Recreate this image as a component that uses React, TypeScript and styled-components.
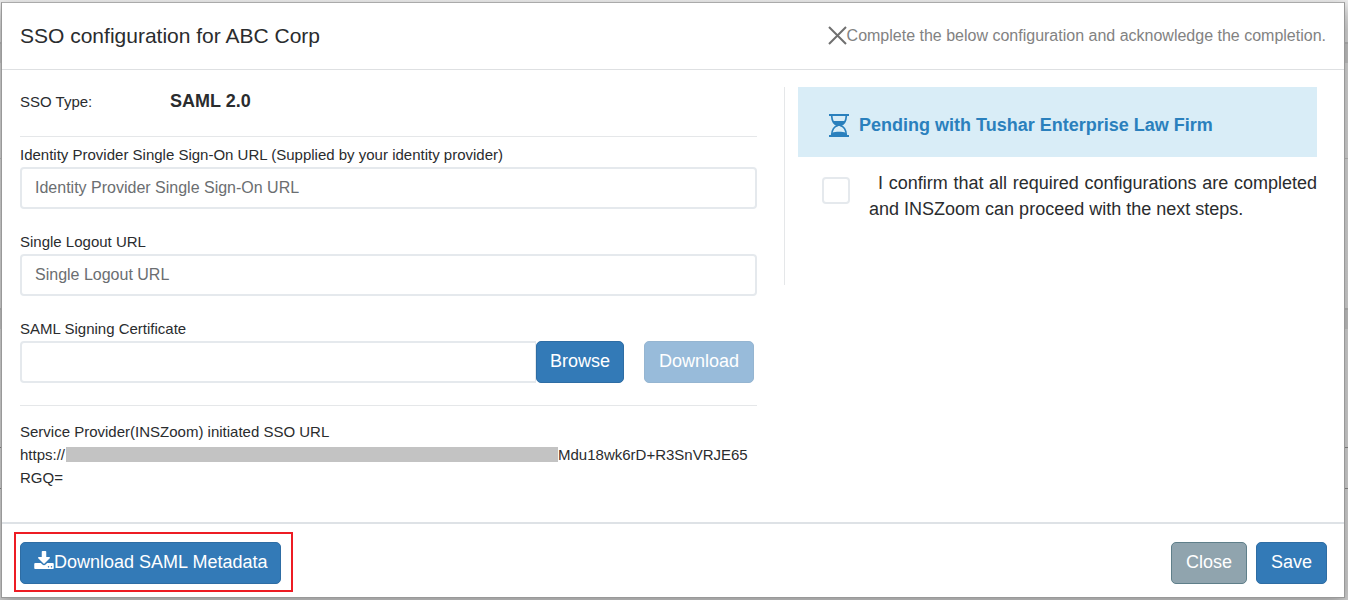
import React from "react";
import styled, { createGlobalStyle } from "styled-components";

const GlobalStyle = createGlobalStyle`
  * { box-sizing: border-box; }
  body {
    margin: 0;
    background: #c4c4c4;
    color: #2a2c2e;
    font-family: "Liberation Sans", Arial, sans-serif;
    font-size: 15px;
    line-height: 23px;
  }
`;

const Page = styled.div`
  display: flex;
  min-height: 100vh;
  padding: 2px 3px 2px 1px;
  background:
    linear-gradient(
      transparent 42px, #b4b4b4 42px 44px, #c2c2c2 44px 63px, transparent 63px,
      transparent 158px, #b8b8b8 158px 159px, transparent 159px,
      transparent 308px, #b4b4b4 308px 310px, #c2c2c2 310px 329px, transparent 329px,
      transparent 447px, #888 447px 448px, transparent 448px,
      transparent 488px, #888 488px 489px, transparent 489px
    ),
    linear-gradient(#eee, #d6d6d6 30px, #d2d2d2);
`;

const Dialog = styled.section`
  flex: 1;
  display: flex;
  flex-direction: column;
  border: 1px solid #999;
  border-top-color: #aaa;
  background: #fff;
  box-shadow: 0 5px 15px rgba(0, 0, 0, 0.3);
`;

const Header = styled.header`
  display: flex;
  align-items: center;
  justify-content: space-between;
  padding: 20px 18px;
  border-bottom: 1px solid #dee0e2;
`;

const Title = styled.h1`
  margin: 0;
  font-size: 21px;
  line-height: 26px;
  font-weight: 400;
`;

const HeaderNote = styled.div`
  display: flex;
  align-items: center;
  padding-bottom: 2px;
  font-size: 16px;
  color: #828282;
`;

const IconButton = styled.button`
  display: flex;
  padding: 0;
  border: 0;
  background: none;
  color: #6f6f6f;
  cursor: pointer;
`;

const Body = styled.main`
  flex: 1;
  display: grid;
  grid-template-columns: 34fr 25fr;
  align-items: start;
  gap: 27px;
  padding: 17px 18px 32px;
`;

const TypeRow = styled.div`
  display: flex;
  align-items: baseline;
  line-height: 28px;
  padding-bottom: 20px;
`;

const TypeLabel = styled.span`
  width: 150px;
`;

const TypeValue = styled.strong`
  font-size: 18px;
`;

const Divider = styled.hr`
  margin: 0;
  border: 0;
  border-top: 1px solid #e5e7e9;
`;

const Fields = styled.div`
  display: grid;
  gap: 22px;
  padding: 7px 0 22px;
`;

const Label = styled.label`
  display: block;
  padding-bottom: 2px;
  line-height: 21px;
`;

const TextInput = styled.input`
  display: block;
  width: 100%;
  height: 42px;
  padding: 0 13px;
  border: 2px solid #e5e9ed;
  border-radius: 4px;
  background: #fff;
  color: #495057;
  font: inherit;
  font-size: 16px;
  &::placeholder { color: #6b6e71; opacity: 1; }
`;

const FileRow = styled.div`
  display: flex;
  padding-right: 3px;
`;

const FileInput = styled(TextInput)`
  flex: 1;
  border-right-width: 1px;
  border-radius: 4px 0 0 4px;
`;

const Button = styled.button<{ $tone?: "primary" | "grey"; $compact?: boolean }>`
  display: flex;
  align-items: center;
  height: 42px;
  padding: 0 ${(p) => (p.$compact ? 13 : 14)}px 2px;
  border: 1px solid ${(p) => (p.$tone === "grey" ? "#5f7f8a" : "#2e6da4")};
  border-radius: 5px;
  background: ${(p) => (p.$tone === "grey" ? "#90a4ae" : "#337ab7")};
  color: #fff;
  font: inherit;
  font-size: 18px;
  white-space: nowrap;
  cursor: pointer;
  &:disabled { opacity: 0.5; cursor: default; }
`;

const DownloadSlot = styled.div`
  margin-left: 20px;
`;

const ServiceUrl = styled.div`
  padding-top: 14px;
`;

const Redacted = styled.span`
  display: inline-block;
  width: 492px;
  height: 15px;
  margin-left: 1px;
  vertical-align: -2px;
  background: #c3c3c3;
`;

const StatusColumn = styled.aside`
  min-height: 198px;
  padding: 0 9px 0 13px;
  border-left: 1px solid #e5e7e9;
`;

const Alert = styled.div`
  display: flex;
  align-items: center;
  gap: 10px;
  height: 70px;
  padding: 6px 31px 0;
  background: #d9edf7;
  color: #2a80bd;
  font-size: 18px;
  font-weight: 700;
`;

const Confirm = styled.div`
  display: flex;
  align-items: flex-start;
  gap: 19px;
  padding: 13px 0 0 24px;
`;

const Checkbox = styled.input`
  appearance: none;
  flex: none;
  width: 28px;
  height: 27px;
  margin: 7px 0 0;
  border: 2px solid #e5e9ed;
  border-radius: 4px;
  background: #fff;
`;

const ConfirmLabel = styled.label`
  font-size: 18px;
  line-height: 26px;
  text-align: justify;
  text-indent: 9px;
`;

const Footer = styled.footer`
  display: flex;
  align-items: flex-start;
  justify-content: space-between;
  padding: 8px 17px 5px 12px;
  border-top: 2px solid #dee2e6;
`;

const Highlight = styled.div`
  padding: 8px 10px 6px 4px;
  border: 2px solid #ed1c24;
`;

const Actions = styled.div`
  display: flex;
  gap: 9px;
  padding-top: 10px;
`;

const Glyph = styled.svg`
  margin-bottom: 4px;
`;

const CloseIcon = () => (
  <svg width="19" height="19" viewBox="0 0 19 19" fill="none" stroke="currentColor" strokeWidth="2" aria-hidden="true">
    <path d="M1 1 18 18M18 1 1 18" />
  </svg>
);

const HourglassIcon = () => (
  <svg width="20" height="23" viewBox="0 0 20 23" aria-hidden="true">
    <path fill="currentColor" d="M0 0H20V2H0ZM0 21H20V23H0ZM3.500 7H16.500C15.500 10 13.500 11 12 12H8C6.500 11 4.500 10 3.500 7ZM2.500 21 3.500 18.500C6 17.500 14 17.500 16.500 18.500L17.500 21Z" />
    <path fill="none" stroke="currentColor" strokeWidth="1.700" d="M2.700 2C2.900 7 5 10.500 9 11.500C5 12.500 2.900 16 2.700 21M17.300 2C17.100 7 15 10.500 11 11.500C15 12.500 17.100 16 17.300 21" />
  </svg>
);

const DownloadIcon = () => (
  <Glyph width="20" height="18" viewBox="0 0 1664 1536" fill="currentColor" aria-hidden="true">
    <path d="M1280 1344q0-26-19-45t-45-19-45 19-19 45 19 45 45 19 45-19 19-45zm256 0q0-26-19-45t-45-19-45 19-19 45 19 45 45 19 45-19 19-45zm128-224v320q0 40-28 68t-68 28H96q-40 0-68-28t-28-68v-320q0-40 28-68t68-28h465l135 136q58 56 136 56t136-56l136-136h464q40 0 68 28t28 68zm-325-569q17 41-14 70l-448 448q-18 19-45 19t-45-19L339 621q-31-29-14-70 17-39 59-39h256V64q0-26 19-45t45-19h256q26 0 45 19t19 45v448h256q42 0 59 39z" />
  </Glyph>
);

export default function App() {
  return (
    <>
      <GlobalStyle />
      <Page>
        <Dialog role="dialog" aria-labelledby="dialog-title">
          <Header>
            <Title id="dialog-title">SSO configuration for ABC Corp</Title>
            <HeaderNote>
              <IconButton type="button" aria-label="Close dialog">
                <CloseIcon />
              </IconButton>
              <span>Complete the below configuration and acknowledge the completion.</span>
            </HeaderNote>
          </Header>
          <Body>
            <div>
              <TypeRow>
                <TypeLabel>SSO Type:</TypeLabel>
                <TypeValue>SAML 2.0</TypeValue>
              </TypeRow>
              <Divider />
              <Fields>
                <div>
                  <Label htmlFor="idp-url">Identity Provider Single Sign-On URL (Supplied by your identity provider)</Label>
                  <TextInput id="idp-url" type="text" placeholder="Identity Provider Single Sign-On URL" />
                </div>
                <div>
                  <Label htmlFor="logout-url">Single Logout URL</Label>
                  <TextInput id="logout-url" type="text" placeholder="Single Logout URL" />
                </div>
                <div>
                  <Label htmlFor="certificate">SAML Signing Certificate</Label>
                  <FileRow>
                    <FileInput id="certificate" type="text" />
                    <Button type="button" $compact>Browse</Button>
                    <DownloadSlot>
                      <Button type="button" disabled>Download</Button>
                    </DownloadSlot>
                  </FileRow>
                </div>
              </Fields>
              <Divider />
              <ServiceUrl>
                <div>Service Provider(INSZoom) initiated SSO URL</div>
                <div>
                  <span>https://</span>
                  <Redacted />
                  <span>Mdu18wk6rD+R3SnVRJE65</span>
                  <wbr />
                  <span>RGQ=</span>
                </div>
              </ServiceUrl>
            </div>
            <StatusColumn>
              <Alert>
                <HourglassIcon />
                <span>Pending with Tushar Enterprise Law Firm</span>
              </Alert>
              <Confirm>
                <Checkbox id="confirm" type="checkbox" />
                <ConfirmLabel htmlFor="confirm">
                  I confirm that all required configurations are completed and INSZoom can proceed with the next steps.
                </ConfirmLabel>
              </Confirm>
            </StatusColumn>
          </Body>
          <Footer>
            <Highlight>
              <Button type="button" $compact>
                <DownloadIcon />
                Download SAML Metadata
              </Button>
            </Highlight>
            <Actions>
              <Button type="button" $tone="grey">Close</Button>
              <Button type="button">Save</Button>
            </Actions>
          </Footer>
        </Dialog>
      </Page>
    </>
  );
}
